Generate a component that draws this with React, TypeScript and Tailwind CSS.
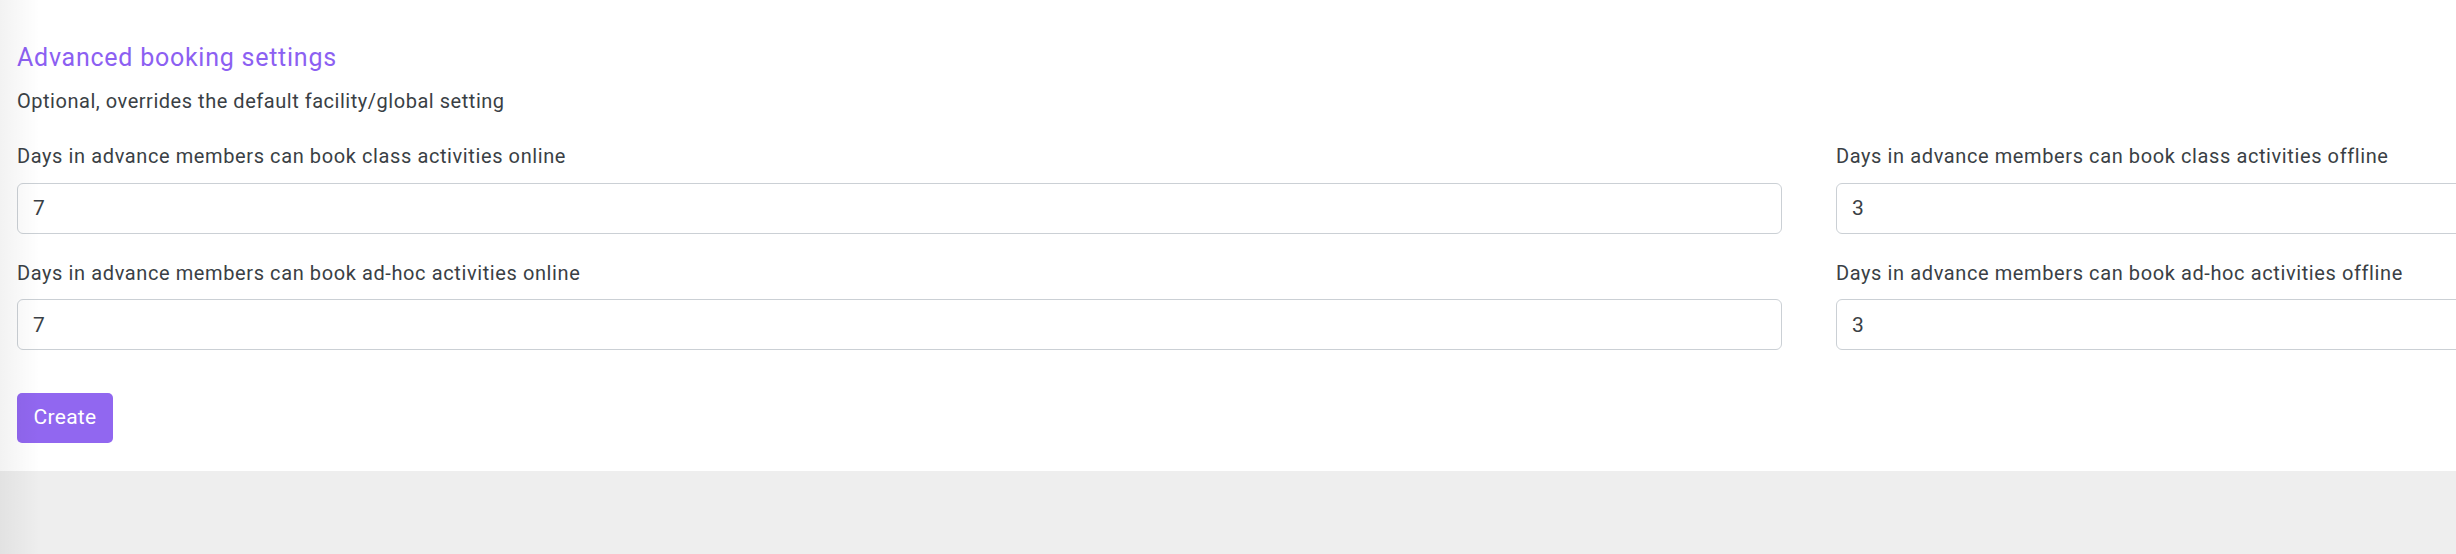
import React from "react";

const fields = [
  { label: "Days in advance members can book class activities online", value: "7" },
  { label: "Days in advance members can book class activities offline", value: "3" },
  { label: "Days in advance members can book ad-hoc activities online", value: "7" },
  { label: "Days in advance members can book ad-hoc activities offline", value: "3" },
];

const Field = ({ label, value }: { label: string; value: string }) => (
  <div className="flex flex-col gap-[14.5px]">
    <label className="text-[20px] leading-[24px] tracking-[0.6px] text-[#3a3f45]">{label}</label>
    <input
      type="text"
      defaultValue={value}
      className="h-[51px] w-full rounded-[6px] border border-[#cbd0d5] bg-white px-[15px] text-[21px] text-[#3a3f45] outline-none"
    />
  </div>
);

const App = () => {
  return (
    <div
      className="relative w-[2456px] h-[554px] overflow-hidden bg-[#eeeeee]"
      style={{ fontFamily: "Roboto, 'Liberation Sans', sans-serif" }}
    >
      <section className="bg-white pl-[17px] pt-[42.5px] pb-[28px]">
        <h2 className="text-[25px] leading-[30px] tracking-[0.75px] text-[#8c60f2]">Advanced booking settings</h2>
        <p className="mt-[16px] text-[20px] leading-[24px] tracking-[0.53px] text-[#3a3f45]">
          Optional, overrides the default facility/global setting
        </p>

        <div className="mt-[31.5px] grid w-[3584px] grid-cols-[1765px_1765px] gap-x-[54px] gap-y-[27px]">
          {fields.map((f) => (
            <Field key={f.label} label={f.label} value={f.value} />
          ))}
        </div>

        <button className="mt-[43px] h-[50px] w-[96px] rounded-[5px] bg-[#9167f0] text-[21px] tracking-[0.3px] text-white">
          Create
        </button>
      </section>

      {/* soft sidebar shadow on the left edge */}
      <div className="pointer-events-none absolute inset-y-0 left-0 w-[40px] bg-gradient-to-r from-[rgba(0,0,0,0.05)] to-transparent" />
    </div>
  );
};

export default App;
